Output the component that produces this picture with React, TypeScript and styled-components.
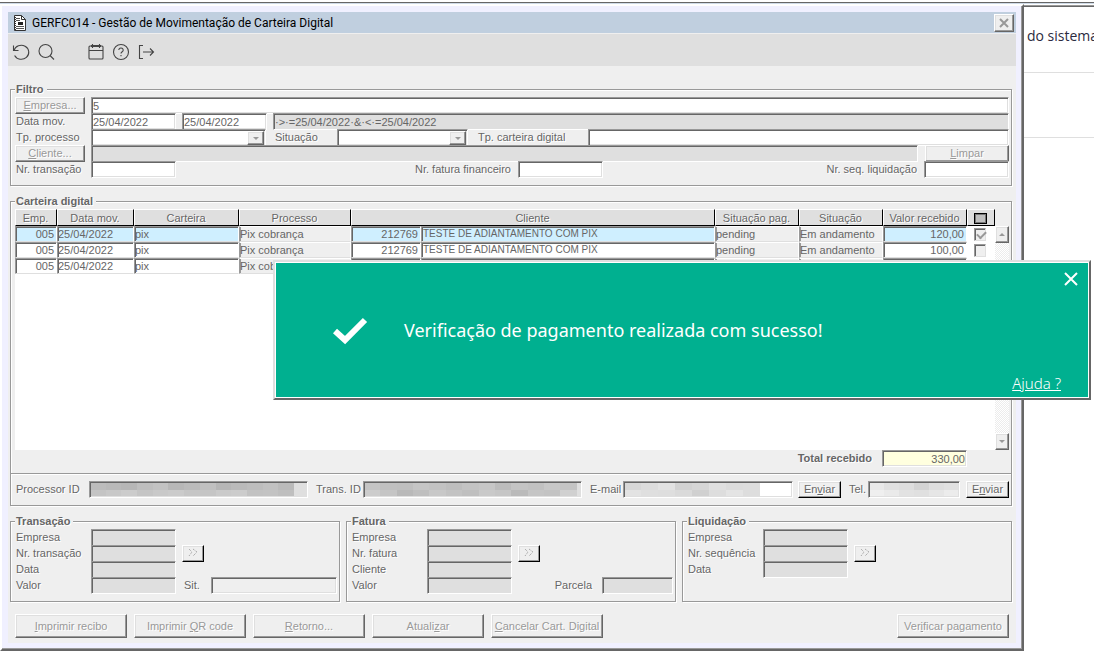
import React from "react";
import styled, { createGlobalStyle, css } from "styled-components";

const GlobalStyle = createGlobalStyle`
  * { box-sizing: border-box; }
  body {
    margin: 0;
    background: #fff;
    color: #666;
    font: 11px/16px "Liberation Sans", Arial, sans-serif;
  }
  button, input, select { font: inherit; color: inherit; margin: 0; border-radius: 0; }
`;

const Desktop = styled.div`
  position: relative;
  min-height: 100vh;
  padding-top: 2px;
`;
const TopEdge = styled.div`
  height: 2px;
  border-top: 1px solid #666;
  background: #cfdbe8;
`;
const Columns = styled.div`
  display: grid;
  grid-template-columns: minmax(0, 1fr) 70px;
`;
const PageBehind = styled.aside`
  border-top: 1px solid #999;
  box-shadow: inset 0 1px 0 #666;
  margin-top: 1px;
  overflow: hidden;
`;
const BehindHeading = styled.p`
  margin: 0;
  height: 67px;
  padding: 20px 0 0 3px;
  border-bottom: 1px solid #dfdfdf;
  font: 14px/20px "Open Sans", "Noto Sans", sans-serif;
  color: #2b2b40;
  white-space: nowrap;
`;
const BehindBlock = styled.div`
  height: 65px;
  border-bottom: 1px solid #dfdfdf;
`;
const BottomEdge = styled.div`
  height: 1px;
  width: 395px;
  margin-left: 4px;
  background: #333a44;
`;

const Window = styled.main`
  padding: 6px;
  background: #f0f0ff;
  border: 2px solid;
  border-color: #fff #666 #666 #fff;
  box-shadow: inset -1px -1px 0 #999;
`;
const TitleBar = styled.header`
  display: flex;
  align-items: center;
  height: 22px;
  padding: 0 2px 0 6px;
  background: #c0cfdf;
  border-bottom: 1px solid #efefef;
`;
const Title = styled.h1`
  flex: 1;
  margin: 0 0 0 6px;
  font: 12px/20px Roboto, "Noto Sans", sans-serif;
  color: #000;
`;
const ToolBar = styled.div`
  display: flex;
  align-items: center;
  gap: 5px;
  height: 32px;
  padding: 3px 3px 0;
  background: #dfdfdf;
`;
const ToolButton = styled.button<{ $apart?: boolean }>`
  display: flex;
  padding: 0;
  margin-left: ${(p) => (p.$apart ? 25 : 0)}px;
  width: 20px;
  height: 20px;
  align-items: center;
  justify-content: center;
  border: 0;
  background: none;
`;
const ToolSvg = styled.svg`
  width: 18px;
  height: 18px;
  fill: none;
  stroke: #444;
  stroke-width: 1.1;
`;
const Body = styled.div`
  padding: 15px 4px 4px 2px;
  background: #efefef;
`;

const Group = styled.fieldset`
  min-width: 0;
  margin: 0 0 7px;
  padding: 0 2px 7px 4px;
  border: 1px solid #999;
  box-shadow: 1px 1px 0 #fff, inset 1px 1px 0 #fff;
`;
const Legend = styled.legend`
  padding: 0 3px 0 1px;
  background: #efefef;
  font-weight: bold;
  text-shadow: 1px 1px 0 #fff;
`;
const Row = styled.div`
  display: flex;
  align-items: flex-start;
  height: 16px;
`;
const Label = styled.label<{ $w?: number; $grow?: boolean; $right?: boolean; $pad?: number }>`
  flex: ${(p) => (p.$grow ? "1 1 0" : `0 0 ${p.$w ? p.$w + "px" : "auto"}`)};
  padding: 0 ${(p) => (p.$right ? 7 : 0)}px 0 ${(p) => p.$pad ?? 1}px;
  text-align: ${(p) => (p.$right ? "right" : "left")};
  white-space: nowrap;
  text-shadow: 1px 1px 0 #fff;
`;
const sunken = css`
  border: 1px solid;
  border-color: #999 #fff #fff #999;
  box-shadow: inset 1px 1px 0 #666, inset -1px -1px 0 #dfdfdf;
`;
const Field = styled.input<{ $w?: number; $tone?: string; $gap?: number }>`
  ${sunken}
  flex: ${(p) => (p.$w ? `0 0 ${p.$w}px` : "1 1 0")};
  min-width: 0;
  width: ${(p) => (p.$w ? p.$w + "px" : "auto")};
  height: 17px;
  margin-left: ${(p) => p.$gap ?? 0}px;
  padding: 0 1px;
  line-height: 15px;
  background: ${(p) => p.$tone ?? "#fff"};
  outline: 0;
`;
const Total = styled(Field)`
  text-align: right;
  margin-right: 42px;
`;
const Censored = styled(Field)<{ $top: string; $bottom: string }>`
  background-image: ${(p) => p.$top}, ${(p) => p.$bottom};
  background-size: 100% 8px, 100% 8px;
  background-position: 0 0, 0 8px;
  background-repeat: no-repeat;
`;
const SelectBox = styled.div<{ $w: number }>`
  ${sunken}
  display: flex;
  flex: 0 0 ${(p) => p.$w}px;
  height: 17px;
  padding: 1px 1px 0 1px;
  background: #fff;
`;
const Select = styled.select`
  flex: 1;
  min-width: 0;
  appearance: none;
  border: 0;
  background: transparent;
  outline: 0;
`;
const raised = css`
  border: 1px solid;
  border-color: #fff #666 #666 #fff;
  box-shadow: inset -1px -1px 0 #999, inset 1px 1px 0 #dfdfdf;
  background: #efefef;
`;
const ArrowBox = styled.span<{ $up?: boolean }>`
  ${raised}
  display: flex;
  flex: none;
  align-items: center;
  justify-content: center;
  width: 17px;
  &::before {
    content: "";
    border: solid transparent;
    border-width: ${(p) => (p.$up ? "0 3px 3px" : "3px 3px 0")};
    border-${(p) => (p.$up ? "bottom" : "top")}-color: #999;
  }
`;
const PushButton = styled.button<{ $w: number; $h?: number; $gap?: number; $live?: boolean }>`
  ${raised}
  display: flex;
  align-items: center;
  justify-content: center;
  flex: 0 0 ${(p) => p.$w}px;
  height: ${(p) => p.$h ?? 17}px;
  margin-left: ${(p) => p.$gap ?? 0}px;
  padding: 0 0 1px;
  line-height: 14px;
  color: ${(p) => (p.$live ? "#666" : "#999")};
  text-shadow: 1px 1px 0 #fff;
  white-space: nowrap;
  ${(p) => p.$live && "border-color: #fff #000 #000 #fff;"}
`;
const RowButton = styled(PushButton)`
  margin-right: 6px;
  &:last-child { margin: 0 0 0 7px; }
`;
const CloseButton = styled.button`
  ${raised}
  display: flex;
  align-items: center;
  justify-content: center;
  width: 20px;
  height: 18px;
  padding: 0;
`;
const Connector = styled.span`
  flex: 0 0 6px;
  height: 17px;
  border-bottom: 1px solid #999;
`;
// Room for the bottom edge of the last field in a group.
const Spacer = styled.div`
  height: 1px;
`;

const GridArea = styled.div`
  display: flex;
  height: 241px;
`;
const GridBody = styled.div`
  flex: 1;
  min-width: 0;
  background: #fff;
`;
const Table = styled.table`
  width: 100%;
  table-layout: fixed;
  border-collapse: separate;
  border-spacing: 0;
`;
const Th = styled.th`
  height: 17px;
  padding: 1px 1px 0 0;
  font-weight: normal;
  line-height: 14px;
  background: #dfdfdf;
  border: 1px solid;
  border-color: #fff #000 #000 #fff;
  text-shadow: 1px 1px 0 #fff;
  white-space: nowrap;
`;
const Td = styled.td<{ $tone?: "row" | "flat" | "bare"; $active?: boolean; $num?: boolean; $caps?: boolean }>`
  height: 16px;
  padding: 0 2px 0 0;
  font-size: ${(p) => (p.$caps ? 10 : 11)}px;
  line-height: 14px;
  overflow: hidden;
  white-space: nowrap;
  text-align: ${(p) => (p.$num ? "right" : "left")};
  background: ${(p) => (p.$tone === "flat" ? "#efefef" : p.$active ? "#cfefff" : "#fff")};
  border: 1px solid;
  border-color: #999 #fff #dfdfdf #999;
  box-shadow: inset 1px 1px 0 #666;
  ${(p) => p.$caps && "padding-left: 1px;"}
  ${(p) => p.$tone === "flat" && "border-color: #fff #fff #dfdfdf #999;box-shadow:inset 1px 0 0 #999;"}
  ${(p) => p.$tone === "bare" && "border-color: transparent; box-shadow: none; background: #fff; padding: 0 0 0 6px;"}
`;
const Tick = styled.input`
  appearance: none;
  display: block;
  width: 12px;
  height: 13px;
  background: #efefef;
  border: 1px solid;
  border-color: #999 #dfdfdf #dfdfdf #999;
  box-shadow: inset 1px 1px 0 #666;
  &:checked::before {
    content: "";
    display: block;
    width: 7px;
    height: 4px;
    margin: 2px 0 0 2px;
    border: solid #999;
    border-width: 0 0 2px 2px;
    transform: rotate(-45deg);
  }
`;
const SelectAll = styled.span`
  display: block;
  width: 13px;
  height: 11px;
  margin: 0 auto;
  border: 1px solid #000;
  box-shadow: inset 0 0 0 1px #777;
  background: #c0c0c0;
`;
const ScrollBar = styled.div`
  display: flex;
  flex-direction: column;
  justify-content: space-between;
  width: 14px;
  margin-top: 17px;
  background: repeating-conic-gradient(#fff 0 25%, #ececec 0 50%) 0 0 / 2px 2px;
  ${ArrowBox} { width: 14px; height: 17px; }
`;
const TotalRow = styled(Row)`
  height: 23px;
  justify-content: flex-end;
`;
const Divider = styled.hr`
  height: 2px;
  margin: 0 -2px 6px -4px;
  border: 0;
  border-top: 1px solid #999;
  background: #fff;
`;
const Groups = styled.div`
  display: grid;
  grid-template-columns: repeat(3, minmax(0, 1fr));
  gap: 6px;
  margin-bottom: 12px;
  ${Group} { margin: 0; }
`;
const GroupRows = styled.div`
  height: 65px;
`;
const Footer = styled.footer`
  display: flex;
  gap: 7px;
  padding: 0 3px 1px 5px;
  button:last-child { margin-left: auto; }
`;

const Toast = styled.section`
  position: absolute;
  top: 260px;
  left: 273px;
  right: 3px;
  height: 140px;
  display: flex;
  align-items: center;
  padding-left: 57px;
  background: #00b090;
  border: 2px solid;
  border-color: #dfdfdf #666 #666 #dfdfdf;
  box-shadow: inset 1px 1px 0 #fff, inset -1px -1px 0 #fff;
  color: #fff;
  font-family: "Noto Sans", "Open Sans", sans-serif;
`;
const ToastText = styled.p`
  margin: 0 0 0 36px;
  font-size: 18px;
  line-height: 24px;
  white-space: nowrap;
`;
const ToastClose = styled.button`
  position: absolute;
  top: 10px;
  right: 11px;
  display: flex;
  padding: 0;
  border: 0;
  background: none;
`;
const HelpLink = styled.a`
  position: absolute;
  right: 28px;
  bottom: 5px;
  font-size: 15px;
  font-weight: 300;
  line-height: 20px;
  color: #fff;
`;

// Hard-edged colour stops: one flat tile per shade.
const tiles = (shades: string, width = 100) =>
  "linear-gradient(90deg," +
  shades
    .split(" ")
    .map((s, i, all) => {
      const step = width / all.length;
      return `#${s} ${i * step}% ${(i + 1) * step}%`;
    })
    .join(",") +
  (width < 100 ? `,transparent ${width}%` : "") +
  ")";

const Arrow = () => (
  <PushButton type="button" $w={22} $gap={6} $live aria-label="Abrir">
    <svg width="12" height="10" fill="none" stroke="#999" strokeDasharray="1 1">
      <path d="M2 1l3 3-3 4M6 1l4 3-4 4" />
    </svg>
  </PushButton>
);

const columns = ["Emp.", "Data mov.", "Carteira", "Processo", "Cliente", "Situação pag.", "Situação", "Valor recebido"];
const records = [
  { cod: "212769", nome: "TESTE DE ADIANTAMENTO COM PIX", pag: "pending", sit: "Em andamento", valor: "120,00", on: true },
  { cod: "212769", nome: "TESTE DE ADIANTAMENTO COM PIX", pag: "pending", sit: "Em andamento", valor: "100,00", on: false },
  { cod: "", nome: "", pag: "", sit: "", valor: "", on: false },
];

const DetailRow = ({ id, label, arrow, children }: { id: string; label: string; arrow?: boolean; children?: React.ReactNode }) => (
  <Row>
    <Label $w={76} htmlFor={id}>{label}</Label>
    <Field id={id} $w={85} $tone="#dfdfdf" readOnly />
    {arrow && <Arrow />}
    {children}
  </Row>
);

export default function App() {
  return (
    <Desktop>
      <GlobalStyle />
      <TopEdge />
      <Columns>
        <Window>
          <TitleBar>
            <svg width="12" height="16" viewBox="0 0 12 16" fill="none">
              <path d="M.5.5h7l4 4v11H.5z" fill="#fff" stroke="#333" />
              <path d="M7.500 .5v4h4" stroke="#333" />
              <path d="M2 3.500h4M2 5.500h4M2 11.500h8M2 13.500h8" stroke="#555" />
              <path d="M4 7h5v3H4z" fill="#222" />
              <path d="M1.500 2v13" stroke="#333" strokeDasharray="1 1" />
            </svg>
            <Title>GERFC014 - Gestão de Movimentação de Carteira Digital</Title>
            <CloseButton type="button" aria-label="Fechar janela">
              <svg width="10" height="10" stroke="#999" strokeWidth="2">
                <path d="M1 1l8 8M9 1l-8 8" />
              </svg>
            </CloseButton>
          </TitleBar>
          <ToolBar>
            <ToolButton type="button" aria-label="Desfazer">
              <ToolSvg><path d="M1.500 2.500v5h5M2 7.500a7.500 7 0 1 1 .6 5" /></ToolSvg>
            </ToolButton>
            <ToolButton type="button" aria-label="Pesquisar">
              <ToolSvg><circle cx="8.500" cy="8" r="6.500" /><path d="M13 12.500l4 4" /></ToolSvg>
            </ToolButton>
            <ToolButton type="button" aria-label="Calendário" $apart>
              <ToolSvg>
                <rect x="2" y="3" width="14" height="13" rx="1" />
                <path d="M2 7.500h14M5.500 1v4M12.500 1v4" />
                <path d="M4 3h10" strokeWidth="2" />
              </ToolSvg>
            </ToolButton>
            <ToolButton type="button" aria-label="Ajuda">
              <ToolSvg>
                <circle cx="9" cy="9" r="7.500" />
                <path d="M6.800 7a2.200 2 0 1 1 3.400 1.700c-.8.500-1.200.8-1.200 1.800M9 12v1.300" />
              </ToolSvg>
            </ToolButton>
            <ToolButton type="button" aria-label="Sair">
              <ToolSvg><path d="M6 2.500H2.500v13H6M6 9h10.500M13 5.500L16.500 9 13 12.500" /></ToolSvg>
            </ToolButton>
          </ToolBar>
          <Body>
            <Group>
              <Legend>Filtro</Legend>
              <Row>
                <RowButton type="button" $w={70}><span><u>E</u>mpresa...</span></RowButton>
                <Field aria-label="Empresa" defaultValue="5" />
              </Row>
              <Row>
                <Label $w={76} htmlFor="dt1">Data mov.</Label>
                <Field id="dt1" $w={85} defaultValue="25/04/2022" />
                <Connector />
                <Field aria-label="Data final" $w={85} defaultValue="25/04/2022" />
                <Field aria-label="Expressão" $gap={6} $tone="#dfdfdf" readOnly value="·>·=25/04/2022·&·<·=25/04/2022" />
              </Row>
              <Row>
                <Label $w={76} htmlFor="proc">Tp. processo</Label>
                <SelectBox $w={175}><Select id="proc" /><ArrowBox /></SelectBox>
                <Label $w={71} $pad={9} htmlFor="sit">Situação</Label>
                <SelectBox $w={131}><Select id="sit" /><ArrowBox /></SelectBox>
                <Label $w={120} $pad={10} htmlFor="cart">Tp. carteira digital</Label>
                <Field id="cart" />
              </Row>
              <Row>
                <RowButton type="button" $w={70}><span><u>C</u>liente...</span></RowButton>
                <Field aria-label="Cliente" $tone="#dfdfdf" readOnly />
                <RowButton type="button" $w={84}><span><u>L</u>impar</span></RowButton>
              </Row>
              <Row>
                <Label $w={76} htmlFor="tr">Nr. transação</Label>
                <Field id="tr" $w={85} />
                <Label $w={342} $right htmlFor="fat">Nr. fatura financeiro</Label>
                <Field id="fat" $w={85} />
                <Label $grow $right htmlFor="liq">Nr. seq. liquidação</Label>
                <Field id="liq" $w={85} />
              </Row>
              <Spacer />
            </Group>

            <Group>
              <Legend>Carteira digital</Legend>
              <GridArea>
                <GridBody>
                  <Table>
                    <colgroup>
                      {[42, 77, 105, 112, 70, 0, 84, 84, 84, 28].map((w, i) => (
                        <col key={i} width={w || undefined} />
                      ))}
                    </colgroup>
                    <thead>
                      <tr>
                        {columns.map((c) => (
                          <Th key={c} colSpan={c === "Cliente" ? 2 : 1}>{c}</Th>
                        ))}
                        <Th aria-label="Selecionar"><SelectAll /></Th>
                      </tr>
                    </thead>
                    <tbody>
                      {records.map((r, i) => (
                        <tr key={i}>
                          <Td $num $active={r.on}>005</Td>
                          <Td $active={r.on}>25/04/2022</Td>
                          <Td $active={r.on}>pix</Td>
                          <Td $tone="flat">Pix cobrança</Td>
                          <Td $num $active={r.on}>{r.cod}</Td>
                          <Td $caps $active={r.on}>{r.nome}</Td>
                          <Td $tone="flat">{r.pag}</Td>
                          <Td $tone="flat">{r.sit}</Td>
                          <Td $num $active={r.on}>{r.valor}</Td>
                          <Td $tone="bare"><Tick type="checkbox" aria-label="Selecionar linha" defaultChecked={r.on} /></Td>
                        </tr>
                      ))}
                    </tbody>
                  </Table>
                </GridBody>
                <ScrollBar><ArrowBox $up /><ArrowBox /></ScrollBar>
              </GridArea>
              <TotalRow>
                <Label $right htmlFor="total"><b>Total recebido</b></Label>
                <Total id="total" $w={85} $gap={3} $tone="#ffffdf" readOnly value="330,00" />
              </TotalRow>
              <Divider />
              <Row>
                <Label $w={74} htmlFor="pid">Processor ID</Label>
                <Censored id="pid" readOnly $tone="#dfdfdf"
                  $top={tiles("bcbcbc b9b9b9 b6b6b6 bebebe c2c2c2 b7b7b7 bbbbbb c0c0c0 b6b6b6 bababa bdbdbd c1c1c1 bababa", 94)}
                  $bottom={tiles("c4c4c4 c8c8c8 cccccc c5c5c5 c9c9c9 cbcbcb c6c6c6 c5c5c5 cacaca cccccc c2c2c2 c3c3c3 bfbfbf", 94)} />
                <Label $w={55} $pad={8} htmlFor="tid">Trans. ID</Label>
                <Censored id="tid" readOnly $tone="#dfdfdf"
                  $top={tiles("c4c4c4 c0c0c0 bfbfbf c5c5c5 c2c2c2 bebebe c3c3c3 c6c6c6 bcbcbc c4c4c4 c1c1c1 c8c8c8 c4c4c4", 98)}
                  $bottom={tiles("cccccc c5c5c5 b9b9b9 bfbfbf c8c8c8 c3c3c3 bfbfbf c9c9c9 c6c6c6 bababa c5c5c5 c3c3c3 d0d0d0", 98)} />
                <Label $w={41} $pad={8} htmlFor="mail">E-mail</Label>
                <Censored id="mail" $w={170}
                  $top={tiles("d7d7d7 dcdcdc e2e2e2 d2d2d2 d6d6d6 e0e0e0 dcdcdc dddddd", 81)}
                  $bottom={tiles("e3e3e3 dfdfdf dedede dadada d0d0d0 dddddd e4e4e4 dddddd", 81)} />
                <PushButton type="button" $w={43} $gap={5} $live><span>En<u>v</u>iar</span></PushButton>
                <Label $w={27} $pad={8} htmlFor="tel">Tel.</Label>
                <Censored id="tel" readOnly $w={92} $tone="#dfdfdf"
                  $top={tiles("e8e8e8 e0e0e0 dddddd d3d3d3 dedede e1e1e1")}
                  $bottom={tiles("efefef eaeaea e2e2e2 e0e0e0 e6e6e6 ececec")} />
                <PushButton type="button" $w={43} $gap={6} $live><span>E<u>n</u>viar</span></PushButton>
              </Row>
              <Spacer />
            </Group>

            <Groups>
              <Group>
                <Legend>Transação</Legend>
                <GroupRows>
                  <DetailRow id="t1" label="Empresa" />
                  <DetailRow id="t2" label="Nr. transação" arrow />
                  <DetailRow id="t3" label="Data" />
                  <DetailRow id="t4" label="Valor">
                    <Label $w={35} $pad={8} htmlFor="t5">Sit.</Label>
                    <Field id="t5" $tone="#efefef" readOnly />
                  </DetailRow>
                </GroupRows>
              </Group>
              <Group>
                <Legend>Fatura</Legend>
                <GroupRows>
                  <DetailRow id="f1" label="Empresa" />
                  <DetailRow id="f2" label="Nr. fatura" arrow />
                  <DetailRow id="f3" label="Cliente" />
                  <DetailRow id="f4" label="Valor">
                    <Label $grow $right htmlFor="f5">Parcela</Label>
                    <Field id="f5" $w={71} $gap={3} $tone="#dfdfdf" readOnly />
                  </DetailRow>
                </GroupRows>
              </Group>
              <Group>
                <Legend>Liquidação</Legend>
                <GroupRows>
                  <DetailRow id="l1" label="Empresa" />
                  <DetailRow id="l2" label="Nr. sequência" arrow />
                  <DetailRow id="l3" label="Data" />
                </GroupRows>
              </Group>
            </Groups>

            <Footer>
              <PushButton type="button" $w={112} $h={24}><span><u>I</u>mprimir recibo</span></PushButton>
              <PushButton type="button" $w={112} $h={24}><span>Imprimir <u>Q</u>R code</span></PushButton>
              <PushButton type="button" $w={112} $h={24}><span><u>R</u>etorno...</span></PushButton>
              <PushButton type="button" $w={112} $h={24}><span>Atuali<u>z</u>ar</span></PushButton>
              <PushButton type="button" $w={112} $h={24}><span><u>C</u>ancelar Cart. Digital</span></PushButton>
              <PushButton type="button" $w={112} $h={24}><span>Ver<u>i</u>ficar pagamento</span></PushButton>
            </Footer>
          </Body>
        </Window>
        <PageBehind>
          <BehindHeading>do sistema</BehindHeading>
          <BehindBlock />
        </PageBehind>
      </Columns>
      <BottomEdge />
      <Toast role="alert">
        <svg width="36" height="30" fill="none" stroke="#fff" strokeWidth="6">
          <path d="M3 16l10 9L33 5" />
        </svg>
        <ToastText>Verificação de pagamento realizada com sucesso!</ToastText>
        <ToastClose type="button" aria-label="Fechar aviso">
          <svg width="14" height="14" stroke="#fff" strokeWidth="2">
            <path d="M1 1l12 12M13 1L1 13" />
          </svg>
        </ToastClose>
        <HelpLink href="#ajuda">Ajuda ?</HelpLink>
      </Toast>
    </Desktop>
  );
}
